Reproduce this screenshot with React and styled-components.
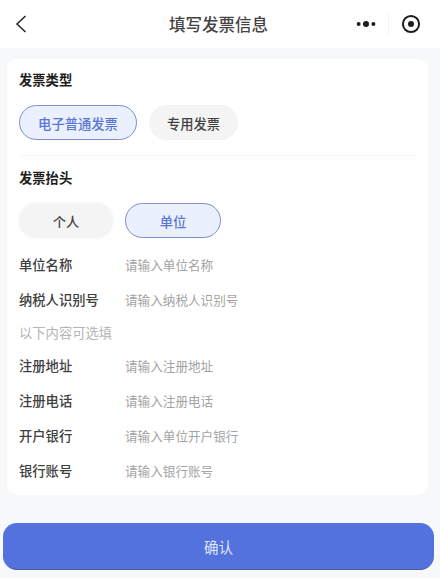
import styled, { createGlobalStyle } from 'styled-components';

const GlobalStyle = createGlobalStyle`
  html, body {
    margin: 0;
    background: #f7f8fa;
  }
  body {
    font-family: "Noto Sans CJK SC", "Liberation Sans", sans-serif;
  }
`;

const requiredFields = [
  { label: '单位名称', hint: '请输入单位名称' },
  { label: '纳税人识别号', hint: '请输入纳税人识别号' },
];

const optionalFields = [
  { label: '注册地址', hint: '请输入注册地址' },
  { label: '注册电话', hint: '请输入注册电话' },
  { label: '开户银行', hint: '请输入单位开户银行' },
  { label: '银行账号', hint: '请输入银行账号' },
];

const App = () => {
  return (
    <Page>
      <GlobalStyle />
      <NavBar>
        <BackButton aria-label="返回">
          <svg width="12" height="20" viewBox="0 0 12 20" fill="none">
            <path d="M10.5 2 2 10l8.5 8" stroke="#2b2b2b" strokeWidth="1.6" />
          </svg>
        </BackButton>
        <NavTitle>填写发票信息</NavTitle>
        <Capsule>
          <svg width="20" height="8" viewBox="0 0 20 8" fill="#1c1c1c">
            <circle cx="2.6" cy="4" r="2" />
            <circle cx="10" cy="4" r="3" />
            <circle cx="17.4" cy="4" r="2" />
          </svg>
          <CapsuleLine />
          <svg width="20" height="20" viewBox="0 0 20 20" fill="none">
            <circle cx="10" cy="10" r="8.1" stroke="#1c1c1c" strokeWidth="2" />
            <circle cx="10" cy="10" r="3" fill="#1c1c1c" />
          </svg>
        </Capsule>
      </NavBar>

      <Card>
        <SectionTitle>发票类型</SectionTitle>
        <ChipRow>
          <Chip $active $width={118}>电子普通发票</Chip>
          <Chip $width={89}>专用发票</Chip>
        </ChipRow>
        <Divider />
        <SectionTitle>发票抬头</SectionTitle>
        <ChipRow>
          <Chip $width={94} $soft>个人</Chip>
          <Chip $active $width={96}>单位</Chip>
        </ChipRow>
        <FieldList>
          {requiredFields.map((field) => (
            <Field key={field.label}>
              <FieldLabel>{field.label}</FieldLabel>
              <FieldHint>{field.hint}</FieldHint>
            </Field>
          ))}
        </FieldList>
        <OptionalNote>以下内容可选填</OptionalNote>
        <FieldList>
          {optionalFields.map((field) => (
            <Field key={field.label}>
              <FieldLabel>{field.label}</FieldLabel>
              <FieldHint>{field.hint}</FieldHint>
            </Field>
          ))}
        </FieldList>
      </Card>

      <Footer>
        <ConfirmButton type="button">确认</ConfirmButton>
      </Footer>
    </Page>
  );
};

export default App;

const Page = styled.div`
  display: flex;
  flex-direction: column;

  width: 440px;
  height: 578px;
  overflow: hidden;

  background-color: #f7f8fa;
`;

const NavBar = styled.header`
  display: flex;
  align-items: center;
  justify-content: space-between;
  flex-shrink: 0;

  height: 48px;
  padding: 0 19px 0 15px;
  box-sizing: border-box;

  background-color: #fff;
`;

const BackButton = styled.button`
  display: flex;

  width: 60px;
  padding: 0;
  border: 0;

  background: none;
`;

const NavTitle = styled.h1`
  margin: 0 0 0 6px;

  color: #444;
  font-size: 16.5px;
  font-weight: 500;
  line-height: 48px;
`;

const Capsule = styled.div`
  display: flex;
  align-items: center;
  gap: 12px;
`;

const CapsuleLine = styled.span`
  width: 1px;
  height: 24px;

  background-color: #f3f3f3;
`;

const Card = styled.main`
  display: flex;
  flex-direction: column;

  height: 436px;
  margin: 11px 12px 0 7px;
  padding: 11px 12px 0;
  box-sizing: border-box;

  border-radius: 10px;
  background-color: #fff;
`;

const SectionTitle = styled.h2`
  margin: 0;

  color: #1d1d1d;
  font-size: 13.3px;
  font-weight: 700;
  line-height: 20px;
`;

const ChipRow = styled.div`
  display: flex;
  align-items: center;
  gap: 12px;

  margin-top: 15px;
`;

const Chip = styled.div`
  display: flex;
  align-items: center;
  justify-content: center;

  width: ${(props) => props.$width}px;
  height: 35px;
  padding-top: 1px;
  box-sizing: border-box;

  border: 1px solid ${(props) => (props.$active ? '#7f8fc8' : 'transparent')};
  border-radius: 18px;
  background-color: ${(props) => (props.$active ? '#eaf0fe' : '#f4f4f5')};
  box-shadow: ${(props) => (props.$soft ? '0 0 3px 1px #f8f8f9' : 'none')};

  color: ${(props) => (props.$active ? '#5a76d2' : '#444')};
  font-size: 13.3px;
  font-weight: 500;
`;

const Divider = styled.div`
  height: 1px;
  margin: 15px 0 12px;

  background-color: #f6f6f7;
`;

const FieldList = styled.div`
  display: flex;
  flex-direction: column;
  gap: 15px;

  margin-top: 16px;
`;

const Field = styled.div`
  display: flex;
  align-items: center;

  height: 20px;
`;

const FieldLabel = styled.span`
  width: 106px;

  color: #404040;
  font-size: 13.3px;
  font-weight: 500;
`;

const FieldHint = styled.span`
  color: #a3a3a3;
  font-size: 12.6px;
`;

const OptionalNote = styled.div`
  margin-top: 14px;
  margin-bottom: -4px;

  color: #b4b4b4;
  font-size: 13.3px;
  line-height: 20px;
`;

const Footer = styled.footer`
  margin-top: 28px;
  padding: 0 6px 0 3px;
`;

const ConfirmButton = styled.button`
  width: 100%;
  height: 47px;
  padding: 0;

  border: 0;
  border-bottom: 1px solid #4a5c9c;
  border-radius: 14px;
  background-color: #5472de;

  color: #dfe6fb;
  font-family: inherit;
  font-size: 14.5px;
`;
